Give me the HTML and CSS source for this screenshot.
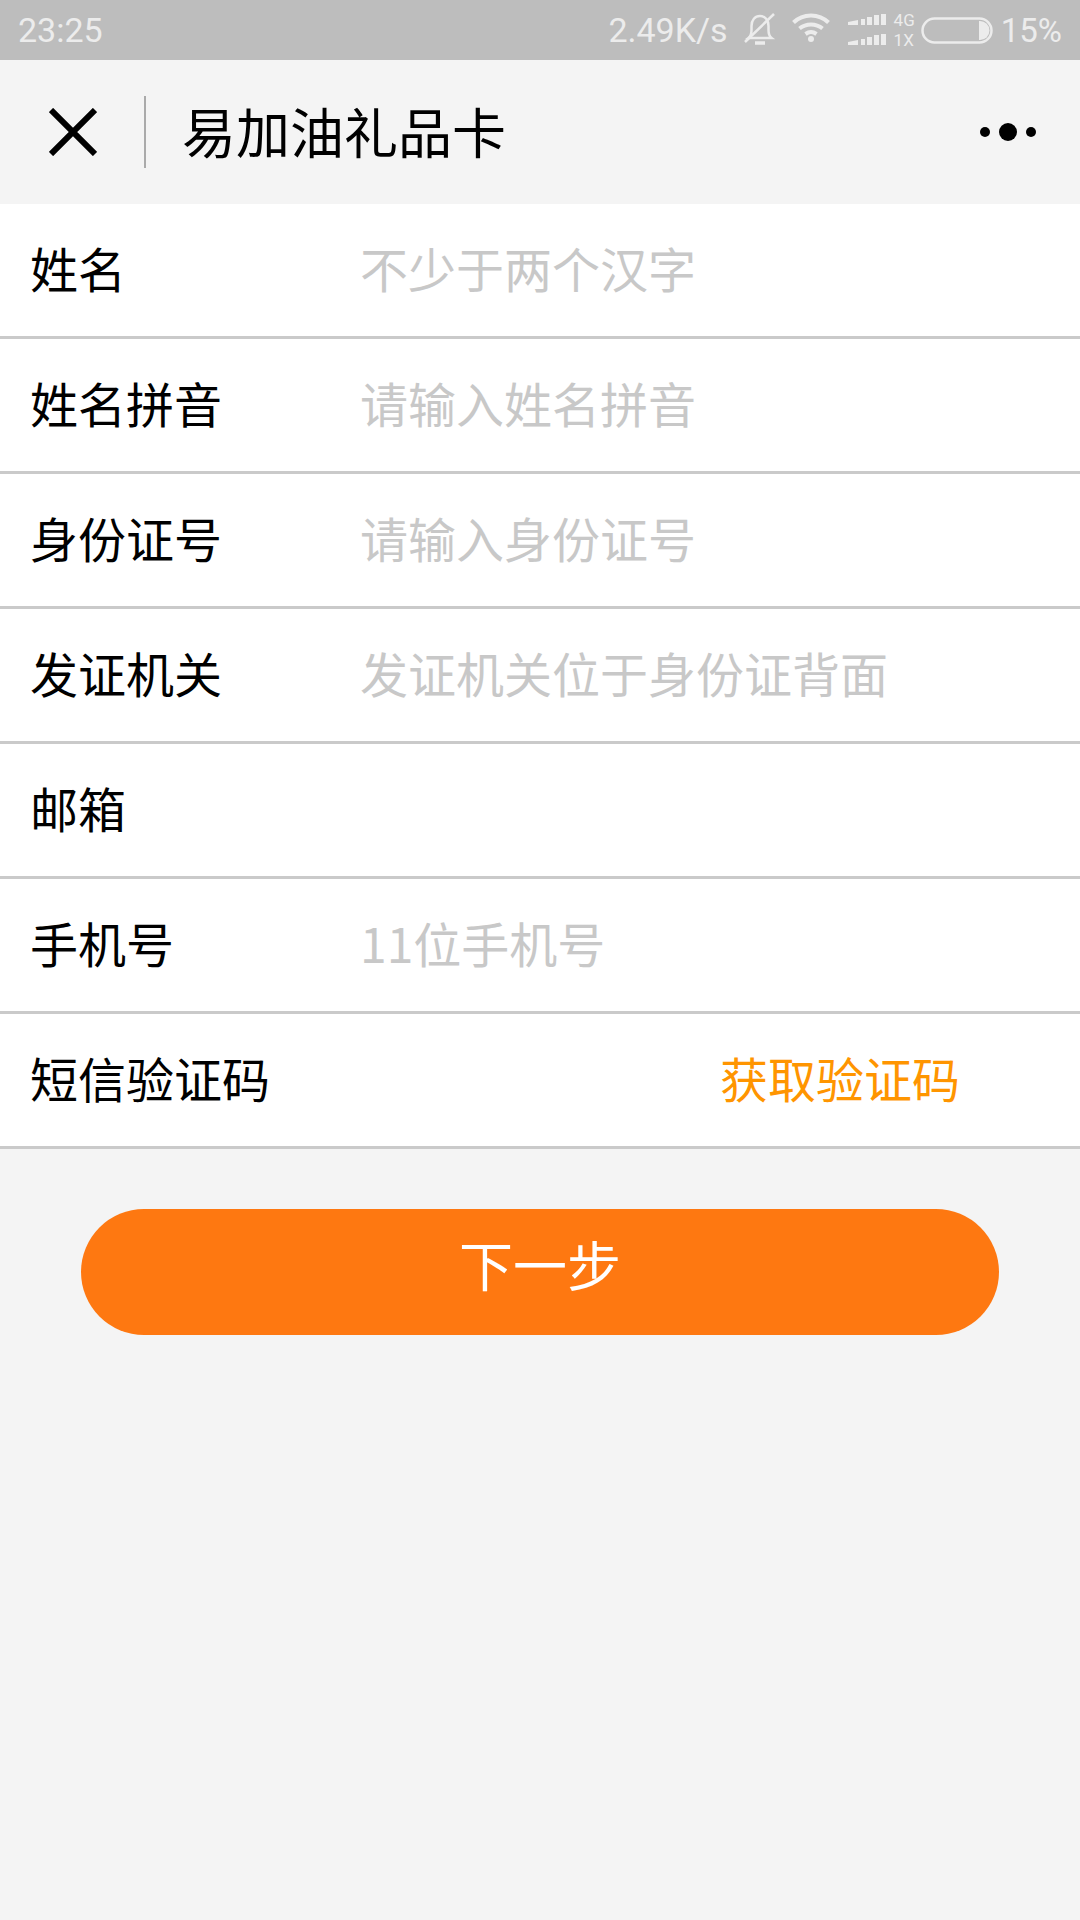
FILE: index.html
```html
<!DOCTYPE html>
<html lang="zh-CN">
<head>
    <meta charset="UTF-8">
    <title>易加油礼品卡</title>
    <link rel="stylesheet" href="styles.css">
</head>
<body>

<div id="container">
    <div class="status-bar">
        <span class="status-time">23:25</span>
        <div class="status-right">
            <span class="status-speed">2.49K/s</span>
            <svg class="icon-bell" width="32" height="34" viewBox="0 0 32 34" fill="none" stroke="#ececec" stroke-width="2.500">
                <path d="M4.500 26c2-1.500 3-4 3-8v-4c0-6 3.500-10 8.500-10s8.500 4 8.500 10v4c0 4 1 6.500 3 8z"/>
                <path d="M11 31h10" stroke-width="3.500"/>
                <path d="M1 30L30 2"/>
            </svg>
            <svg class="icon-wifi" width="38" height="30" viewBox="0 0 38 30" fill="none" stroke="#ececec" stroke-width="4">
                <path d="M1.500 10.500C11 1 27 1 36.500 10.500"/>
                <path d="M7.500 16.500c6.500-5.500 16.500-5.500 23 0"/>
                <path d="M13.500 22c3.500-2.500 7.500-2.500 11 0"/>
                <circle cx="19" cy="27" r="3" fill="#ececec" stroke="none"/>
            </svg>
            <div class="signal-group">
                <svg width="38" height="32" viewBox="0 0 38 32" fill="#ececec">
                    <path d="M0 8l10-2v5H0zM13 5h4v6h-4zM19 3h5v8h-5zM26 1h5v10h-5zM33 0h5v11h-5z"/>
                    <path d="M0 28l10-2v5H0zM13 25h4v6h-4zM19 23h5v8h-5zM26 21h5v10h-5zM33 20h5v11h-5z"/>
                </svg>
                <div class="signal-labels">
                    <span>4G</span>
                    <span>1X</span>
                </div>
            </div>
            <svg class="icon-battery" width="72" height="27" viewBox="0 0 72 27">
                <rect x="1.500" y="1.500" width="69" height="24" rx="12" fill="none" stroke="#ececec" stroke-width="2.500"/>
                <path d="M58 4h1a9.500 9.500 0 0 1 0 19h-1z" fill="#ececec"/>
            </svg>
            <span class="status-battery">15%</span>
        </div>
    </div>

    <div class="nav-bar">
        <svg class="icon-close" width="48" height="48" viewBox="0 0 48 48" stroke="#000" stroke-width="6">
            <path d="M2 2L46 46M46 2L2 46"/>
        </svg>
        <div class="nav-divider"></div>
        <div class="nav-title">易加油礼品卡</div>
        <div class="nav-more">
            <span class="dot"></span>
            <span class="dot dot-big"></span>
            <span class="dot"></span>
        </div>
    </div>

    <div class="form">
        <div class="row">
            <span class="row-label">姓名</span>
            <span class="row-hint">不少于两个汉字</span>
        </div>
        <div class="row">
            <span class="row-label">姓名拼音</span>
            <span class="row-hint">请输入姓名拼音</span>
        </div>
        <div class="row">
            <span class="row-label">身份证号</span>
            <span class="row-hint">请输入身份证号</span>
        </div>
        <div class="row">
            <span class="row-label">发证机关</span>
            <span class="row-hint">发证机关位于身份证背面</span>
        </div>
        <div class="row">
            <span class="row-label">邮箱</span>
        </div>
        <div class="row">
            <span class="row-label">手机号</span>
            <span class="row-hint">11位手机号</span>
        </div>
        <div class="row">
            <span class="row-label">短信验证码</span>
            <span class="row-link">获取验证码</span>
        </div>
    </div>

    <button class="btn-next">下一步</button>
</div>

</body>
</html>
```

FILE: styles.css
```css
* {
    box-sizing: border-box;
}
body {
    margin: 0;
    font-family: "Noto Sans CJK SC", "Noto Sans", sans-serif;
}
#container {
    width: 1080px;
    height: 1920px;
    background-color: #f4f4f4;
    overflow: hidden;
}
.status-bar {
    height: 60px;
    background-color: #bdbdbd;
    color: #ececec;
    font-family: Roboto, sans-serif;
    font-size: 34px;
    display: flex;
    align-items: center;
    justify-content: space-between;
    padding: 0 18px;
}
.status-right {
    display: flex;
    align-items: center;
}
.icon-bell {
    margin: 0 0 2px 16px;
}
.icon-wifi {
    margin: 0 0 6px 16px;
}
.signal-group {
    display: flex;
    align-items: center;
    margin-left: 18px;
}
.signal-labels {
    display: flex;
    flex-direction: column;
    font-size: 17px;
    line-height: 20px;
    margin-left: 8px;
}
.icon-battery {
    margin-left: 6px;
}
.status-battery {
    margin-left: 8px;
    font-size: 33px;
}
.nav-bar {
    height: 144px;
    display: flex;
    align-items: center;
    padding: 0 44px 0 49px;
}
.icon-close {
    flex: none;
}
.nav-divider {
    width: 2px;
    height: 72px;
    background-color: #aaaaaa;
    margin-left: 47px;
}
.nav-title {
    flex: 1;
    margin-left: 36px;
    padding-bottom: 4px;
    font-size: 54px;
    color: #000;
}
.nav-more {
    display: flex;
    align-items: center;
    gap: 9px;
}
.dot {
    width: 10px;
    height: 10px;
    border-radius: 50%;
    background-color: #000;
}
.dot-big {
    width: 18px;
    height: 18px;
}
.form {
    background-color: #fff;
}
.row {
    height: 135px;
    border-bottom: 3px solid #cacaca;
    display: flex;
    align-items: center;
    padding: 0 0 6px 30px;
    font-size: 48px;
}
.row-label {
    width: 330px;
    color: #000;
}
.row-hint {
    color: #c8c8c8;
}
.row-link {
    margin-left: auto;
    margin-right: 120px;
    color: #ff9500;
}
.btn-next {
    display: block;
    width: 918px;
    height: 126px;
    margin: 60px auto 0 auto;
    padding: 0 0 18px 0;
    border: none;
    border-radius: 63px;
    background-color: #fe7811;
    color: #fff;
    font-family: inherit;
    font-size: 54px;
}
```
